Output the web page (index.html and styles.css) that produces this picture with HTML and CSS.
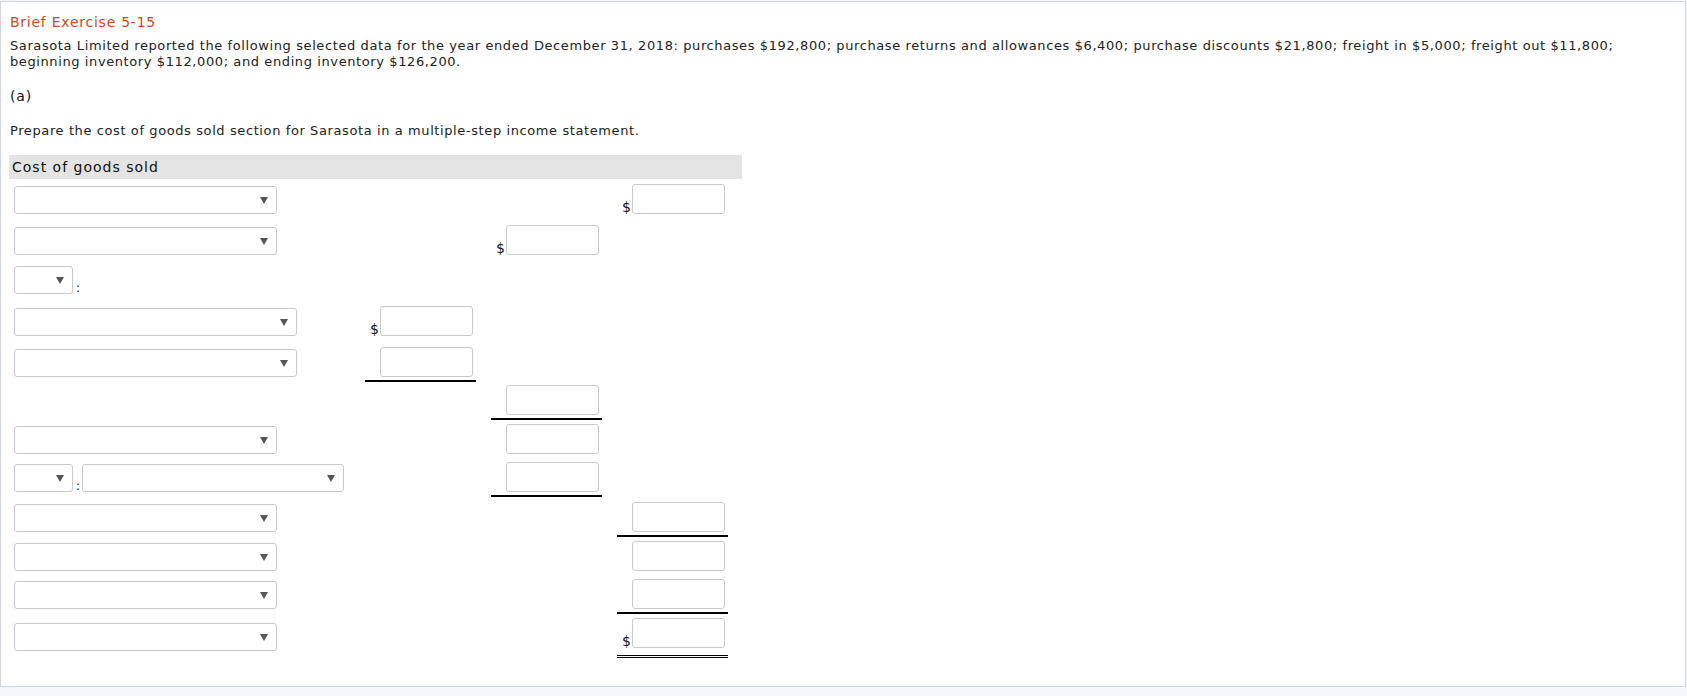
FILE: index.html
```html
<!DOCTYPE html>
<html>
<head>
<meta charset="utf-8">
<title>Brief Exercise 5-15</title>
<link rel="stylesheet" href="styles.css">
</head>
<body>
<div class="frame">
  <div class="title">Brief Exercise 5-15</div>
  <p class="intro">Sarasota Limited reported the following selected data for the year ended December 31, 2018: purchases $192,800; purchase returns and allowances $6,400; purchase discounts $21,800; freight in $5,000; freight out $11,800; beginning inventory $112,000; and ending inventory $126,200.</p>
  <div class="part">(a)</div>
  <p class="prompt">Prepare the cost of goods sold section for Sarasota in a multiple-step income statement.</p>

  <div class="sheet">
    <div class="sheet-head">Cost of goods sold</div>
    <div class="grid">
      <!-- row 1 -->
      <div class="lab"><div class="sel w263"><span class="caret"></span></div></div>
      <div class="cell"></div>
      <div class="cell"></div>
      <div class="cell"><span class="cur">$</span><div class="inp"></div></div>
      <!-- row 2 -->
      <div class="lab"><div class="sel w263"><span class="caret"></span></div></div>
      <div class="cell"></div>
      <div class="cell"><span class="cur">$</span><div class="inp"></div></div>
      <div class="cell"></div>
      <!-- row 3 -->
      <div class="lab"><div class="sel w59"><span class="caret"></span></div><span class="colon">:</span></div>
      <div class="cell"></div>
      <div class="cell"></div>
      <div class="cell"></div>
      <!-- row 4 -->
      <div class="lab"><div class="sel w283"><span class="caret"></span></div></div>
      <div class="cell"><span class="cur">$</span><div class="inp"></div></div>
      <div class="cell"></div>
      <div class="cell"></div>
      <!-- row 5 -->
      <div class="lab"><div class="sel w283"><span class="caret"></span></div></div>
      <div class="cell under"><div class="inp"></div></div>
      <div class="cell"></div>
      <div class="cell"></div>
      <!-- row 6 -->
      <div class="lab"></div>
      <div class="cell"></div>
      <div class="cell under"><div class="inp"></div></div>
      <div class="cell"></div>
      <!-- row 7 -->
      <div class="lab"><div class="sel w263"><span class="caret"></span></div></div>
      <div class="cell"></div>
      <div class="cell"><div class="inp"></div></div>
      <div class="cell"></div>
      <!-- row 8 -->
      <div class="lab"><div class="sel w59"><span class="caret"></span></div><span class="colon">:</span><div class="sel w262"><span class="caret"></span></div></div>
      <div class="cell"></div>
      <div class="cell under"><div class="inp"></div></div>
      <div class="cell"></div>
      <!-- row 9 -->
      <div class="lab"><div class="sel w263"><span class="caret"></span></div></div>
      <div class="cell"></div>
      <div class="cell"></div>
      <div class="cell under"><div class="inp"></div></div>
      <!-- row 10 -->
      <div class="lab"><div class="sel w263"><span class="caret"></span></div></div>
      <div class="cell"></div>
      <div class="cell"></div>
      <div class="cell"><div class="inp"></div></div>
      <!-- row 11 -->
      <div class="lab"><div class="sel w263"><span class="caret"></span></div></div>
      <div class="cell"></div>
      <div class="cell"></div>
      <div class="cell under"><div class="inp"></div></div>
      <!-- row 12 -->
      <div class="lab last"><div class="sel w263"><span class="caret"></span></div></div>
      <div class="cell"></div>
      <div class="cell"></div>
      <div class="cell double"><span class="cur">$</span><div class="inp"></div></div>
    </div>
  </div>
</div>
</body>
</html>
```
FILE: styles.css
```css
html, body {
  margin: 0;
  padding: 0;
}
body {
  background: #f4f7fb;
  font-family: "DejaVu Sans", Verdana, sans-serif;
  color: #222;
}
.frame {
  box-sizing: border-box;
  margin-top: 1px;
  width: 1686px;
  height: 686px;
  background: #fff;
  border: 1px solid #cfd6e0;
  padding: 11px 8px 0 8px;
}
.title {
  font-size: 14px;
  line-height: 18px;
  letter-spacing: 0.75px;
  color: #d4471a;
  padding-left: 1px;
}
.intro {
  margin: 7px 0 0 0;
  font-size: 13px;
  line-height: 16px;
  letter-spacing: 0.6px;
  padding-left: 1px;
}
.part {
  margin-top: 17px;
  font-size: 14px;
  line-height: 18px;
  letter-spacing: 0.8px;
  padding-left: 1px;
  color: #111;
}
.prompt {
  margin: 17px 0 0 0;
  font-size: 13px;
  line-height: 18px;
  letter-spacing: 0.6px;
  padding-left: 1px;
}
.sheet {
  margin-top: 15px;
  width: 733px;
}
.sheet-head {
  height: 24px;
  line-height: 24px;
  background: #e4e4e4;
  font-size: 14px;
  letter-spacing: 1px;
  padding-left: 3px;
  color: #111;
}
.grid {
  display: grid;
  grid-template-columns: 336px 111px 111px 111px;
  grid-template-rows: 40px 41px 39px 42px 41px 38px 39px 38px 40px 39px 38px 44px;
  column-gap: 15px;
  padding-left: 5px;
  align-items: end;
}
.lab {
  display: flex;
  align-items: flex-end;
  padding-bottom: 5px;
}
.lab.last {
  padding-bottom: 7px;
}
.cell {
  box-sizing: border-box;
  height: 100%;
  display: flex;
  justify-content: flex-end;
  align-items: flex-end;
  padding: 0 3px 5px 0;
}
.cell.under {
  padding-bottom: 3px;
  border-bottom: 2px solid #000;
}
.cell.double {
  padding-bottom: 7px;
  border-bottom: 3px double #000;
}
.inp {
  box-sizing: border-box;
  width: 93px;
  height: 30px;
  border: 1px solid #cacaca;
  border-radius: 3px;
  background: #fff;
}
.cur {
  font-size: 14px;
  line-height: 14px;
  margin-right: 1px;
  color: #111;
}
.sel {
  box-sizing: border-box;
  height: 28px;
  border: 1px solid #cacaca;
  border-radius: 3px;
  background: #fff;
  position: relative;
  flex: none;
}
.w263 { width: 263px; }
.w283 { width: 283px; }
.w59 { width: 59px; }
.w262 { width: 262px; }
.caret {
  position: absolute;
  right: 8px;
  top: 10px;
  width: 0;
  height: 0;
  border-left: 4px solid transparent;
  border-right: 4px solid transparent;
  border-top: 7px solid #555;
}
.colon {
  font-size: 12px;
  line-height: 12px;
  width: 9px;
  padding-left: 3px;
  box-sizing: border-box;
  color: #111;
}
```
